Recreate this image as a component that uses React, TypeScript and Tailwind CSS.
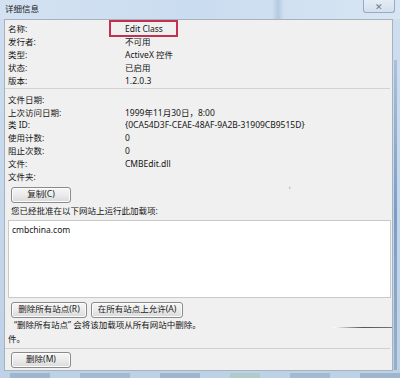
import React from "react";

const font = { fontFamily: '"Noto Sans", "Noto Sans CJK SC", sans-serif' };

function Btn({ w, children }: { w: string; children: React.ReactNode }) {
  return (
    <div
      className={`${w} h-[16px] flex items-center justify-center rounded-[3px] border border-[#8a8a8a] bg-gradient-to-b from-[#f6f6f6] via-[#ebebeb] to-[#d9d9d9] text-[8.5px] text-[#1a1a1a] shadow-[inset_0_0_0_1px_#fcfcfc]`}
    >
      {children}
    </div>
  );
}

function Row({ label, value, children }: { label: string; value?: string; children?: React.ReactNode }) {
  return (
    <div className="relative flex h-[12.9px] items-center">
      <div className="w-[120px] pl-[3px] whitespace-nowrap">{label}</div>
      <div className="whitespace-nowrap">{value}</div>
      {children}
    </div>
  );
}

export default function App() {
  return (
    <div
      className="relative w-[400px] h-[378px] overflow-hidden bg-gradient-to-b from-[#cfdff0] to-[#bdd1e7] text-[8.5px] text-[#151515] leading-none"
      style={font}
    >
      {/* title bar */}
      <div className="relative h-[19px] flex items-center pl-[5px] bg-gradient-to-r from-[#d3e2f2] via-[#cadcf0] to-[#d8e6f3]">
        <span className="text-[8.5px] text-[#1a1a1a]">详细信息</span>
        <div className="absolute left-[272px] top-0 w-[12px] h-[19px] bg-gradient-to-r from-transparent via-[#b4c9e0] to-transparent" />
        <div className="absolute left-[363px] top-0 w-[32px] h-[13px] flex items-center justify-center rounded-b-[3px] border border-t-0 border-[#98abc2] bg-gradient-to-b from-[#e4edf6] to-[#d2dfed]">
          <span className="text-[9px] text-[#6b7a8a] leading-none">✕</span>
        </div>
      </div>

      {/* content panel */}
      <div className="ml-[4px] w-[389px] h-[352px] border border-[#a9b2bc] bg-[#f0f0f0] flex flex-col">
        <div className="pt-[3px]">
          <Row label="名称:" value="Edit Class">
            <div className="absolute left-[104px] top-[-3px] w-[69px] h-[17px] border-2 border-[#c4304e]" />
          </Row>
          <Row label="发行者:" value="不可用" />
          <Row label="类型:" value="ActiveX 控件" />
          <Row label="状态:" value="已启用" />
          <Row label="版本:" value="1.2.0.3" />
        </div>
        <div className="mt-[1px] h-px bg-[#d2d2d2] mr-[2px]" />
        <div className="mt-[4px]">
          <Row label="文件日期:" />
          <Row label="上次访问日期:" value="1999年11月30日，8:00" />
          <Row label="类 ID:" value="{0CA54D3F-CEAE-48AF-9A2B-31909CB9515D}" />
          <Row label="使用计数:" value="0" />
          <Row label="阻止次数:" value="0" />
          <Row label="文件:" value="CMBEdit.dll" />
          <Row label="文件夹:" />
        </div>
        <div className="mt-[3px] ml-[6px]">
          <Btn w="w-[60px]">复制(C)</Btn>
        </div>
        <div className="mt-[3px] ml-[6px] h-[12px] flex items-center whitespace-nowrap">
          您已经批准在以下网站上运行此加载项:
        </div>
        <div className="mt-[2px] ml-[3px] mr-[1px] h-[78px] border border-[#c9c9c9] bg-white pl-[3px] pt-[5px]">
          cmbchina.com
        </div>
        <div className="mt-[4px] ml-[6px] flex gap-[4px]">
          <Btn w="w-[76px]">删除所有站点(R)</Btn>
          <Btn w="w-[92px]">在所有站点上允许(A)</Btn>
        </div>
        <div className="mt-[1px] ml-[9px] h-[14px] flex items-center whitespace-nowrap">
          “删除所有站点” 会将该加载项从所有网站中删除。
        </div>
        <div className="ml-[3px] h-[14px] flex items-center">件。</div>
        <div className="mt-[1px] h-px bg-[#d0d0d0] mr-[2px]" />
        <div className="mt-[3px] ml-[6px]">
          <Btn w="w-[60px]">删除(M)</Btn>
        </div>
      </div>

      {/* decorative artifacts */}
      <div className="absolute left-[334px] top-[327px] w-[58px] h-[1px] bg-gradient-to-r from-[#ffffff] via-[#555] to-[#777]" />
      <div className="absolute left-[289px] top-[186px] text-[8px] text-[#9a9a9a]">ʼ</div>
      <div className="absolute left-[394px] top-[60px] w-[3px] h-[310px] bg-gradient-to-b from-[#a9c0da] via-[#7d9dc2] to-[#95b0cd]" />
      <div className="absolute left-0 top-[373px] w-[400px] h-[5px] flex gap-[30px] pl-[10px] opacity-60">
        <div className="w-[40px] bg-[#8aa3bf]" />
        <div className="w-[50px] bg-[#94abc5]" />
        <div className="w-[40px] bg-[#8aa3bf]" />
        <div className="w-[30px] bg-[#a8c8b8]" />
        <div className="w-[40px] bg-[#94abc5]" />
        <div className="w-[40px] bg-[#8aa3bf]" />
      </div>
    </div>
  );
}
